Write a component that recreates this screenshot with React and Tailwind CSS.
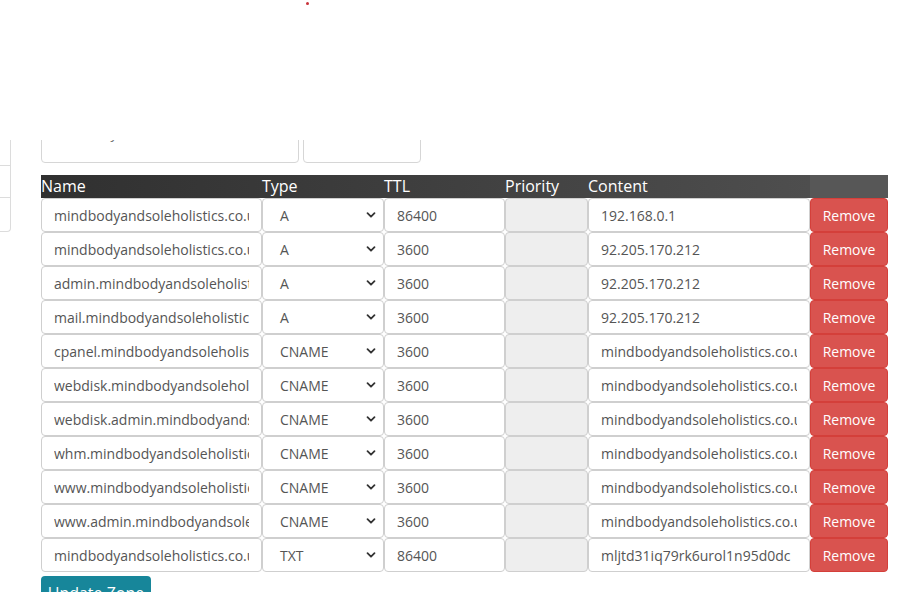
import React from "react";

const rows = [
  ["mindbodyandsoleholistics.co.uk.", "A", "86400", "192.168.0.1"],
  ["mindbodyandsoleholistics.co.uk.", "A", "3600", "92.205.170.212"],
  ["admin.mindbodyandsoleholistics.co.uk.", "A", "3600", "92.205.170.212"],
  ["mail.mindbodyandsoleholistics.co.uk.", "A", "3600", "92.205.170.212"],
  ["cpanel.mindbodyandsoleholistics.co.uk.", "CNAME", "3600", "mindbodyandsoleholistics.co.uk"],
  ["webdisk.mindbodyandsoleholistics.co.uk.", "CNAME", "3600", "mindbodyandsoleholistics.co.uk"],
  ["webdisk.admin.mindbodyandsoleholistics.co.uk.", "CNAME", "3600", "mindbodyandsoleholistics.co.uk"],
  ["whm.mindbodyandsoleholistics.co.uk.", "CNAME", "3600", "mindbodyandsoleholistics.co.uk"],
  ["www.mindbodyandsoleholistics.co.uk.", "CNAME", "3600", "mindbodyandsoleholistics.co.uk"],
  ["www.admin.mindbodyandsoleholistics.co.uk.", "CNAME", "3600", "mindbodyandsoleholistics.co.uk"],
  ["mindbodyandsoleholistics.co.uk.", "TXT", "86400", "mljtd31iq79rk6urol1n95d0dc"],
];

function Chevron() {
  return (
    <svg width="10" height="10" viewBox="0 0 10 10" className="absolute right-[8px] top-1/2 -translate-y-1/2">
      <path d="M1.5 3.2 L5 6.7 L8.5 3.2" fill="none" stroke="#333" strokeWidth="1.8" strokeLinecap="round" strokeLinejoin="round" />
    </svg>
  );
}

const baseCls =
  "block w-full h-[34px] border border-[#cfcfcf] rounded-[4px] px-[12px] text-[14px] text-[#555] outline-none font-['Open_Sans',sans-serif]";
const inputCls = baseCls + " bg-white";

export default function App() {
  return (
    <div className="relative min-h-screen bg-white font-['Open_Sans',sans-serif]">
      {/* fixed top header overlay */}
      <div className="fixed top-0 left-0 right-0 h-[140px] bg-white z-10">
        <div className="absolute left-[306px] top-[2px] w-[3px] h-[3px] rounded-full bg-[#c8323a]"></div>
      </div>

      <div className="flex pt-[122px]">
        <aside className="w-[11px] shrink-0">
          <div className="h-[44px] border-r border-b border-[#dcdcdc]"></div>
          <div className="h-[32px] border-r border-b border-[#dcdcdc]"></div>
          <div className="h-[34px] border-r border-b border-[#dcdcdc] rounded-br-[4px]"></div>
        </aside>

        <main className="ml-[30px] w-[847px]">
          <div className="flex gap-[4px] mb-[12px]">
            <div className="w-[258px] h-[41px] border border-[#d6d6d6] rounded-[4px] px-[12px] pt-0 text-[14px] leading-[20px] text-[#777]">
              Search by
            </div>
            <div className="w-[118px] h-[41px] border border-[#d6d6d6] rounded-[4px]"></div>
          </div>

          <div className="grid grid-cols-[221px_122px_121px_83px_222px_78px]">
            <div className="col-span-5 h-[23px] bg-gradient-to-r from-[#303030] to-[#4e4e4e] grid grid-cols-[221px_122px_121px_83px_222px] text-white text-[16px] leading-[22px]">
              <div>Name</div>
              <div>Type</div>
              <div>TTL</div>
              <div>Priority</div>
              <div>Content</div>
            </div>
            <div className="h-[23px] bg-[#575757]"></div>

            {rows.map((r, i) => (
              <React.Fragment key={i}>
                <input readOnly value={r[0]} className={inputCls} />
                <div className="relative">
                  <div className={inputCls + " flex items-center pl-[17px]"}>{r[1]}</div>
                  <Chevron />
                </div>
                <input readOnly value={r[2]} className={inputCls} />
                <div className={baseCls + " bg-[#eeeeee]"}></div>
                <input readOnly value={r[3]} className={inputCls} />
                <button className="h-[34px] w-full rounded-[4px] bg-[#d9534f] border border-[#d43f3a] text-white text-[14px] font-['Open_Sans',sans-serif]">
                  Remove
                </button>
              </React.Fragment>
            ))}
          </div>

          <button className="mt-[4px] w-[110px] h-[34px] rounded-[4px] bg-[#17869a] text-white text-[16px] font-['Open_Sans',sans-serif]">
            Update Zone
          </button>
        </main>
      </div>
    </div>
  );
}
